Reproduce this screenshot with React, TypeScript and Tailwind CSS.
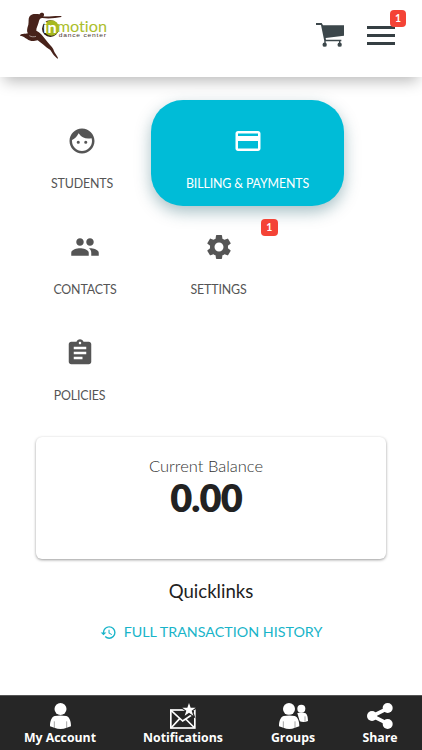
import React from "react";
import { MdFace, MdPayment, MdPeople, MdSettings, MdAssignment, MdHistory } from "react-icons/md";

function Logo() {
  return (
    <svg viewBox="54 33 272 146" className="block h-[48.7px] w-[90.7px] [font-variant-ligatures:none]" aria-label="inmotion dance center">
      <circle cx="151" cy="86" r="25" fill="#2e1c12" />
      <circle cx="154" cy="84" r="23" fill="#a6b820" />
      <path
        d="M119 43C120 37 130 37 132 42C133 46 131 49 128 49C146 51 163 47 184 48L184 51C166 54 148 57 127 54C120 54 117 60 116 67C114 77 108 84 109 92C120 97 128 107 136 118C144 130 156 139 160 148C163 160 175 171 174 176C166 173 157 160 151 150C135 140 125 129 113 121C106 122 101 124 94 123C82 120 72 108 60 107C62 100 73 103 84 100C79 94 82 83 85 74C87 65 84 55 89 49C95 40 108 42 119 43Z"
        fill="#47221a"
      />
      <path d="M88 107C94 111 102 111 108 109" stroke="#fff" strokeWidth="1.5" fill="none" />
      <text x="130" y="98" textLength="40" lengthAdjust="spacingAndGlyphs" fontFamily="Lato, sans-serif" fontWeight="700" fontSize="44" fill="#fff">in</text>
      <text x="170" y="97" textLength="151" lengthAdjust="spacingAndGlyphs" fontFamily="Lato, sans-serif" fontSize="45" fill="#abbe2b">motion</text>
      <text x="176" y="112" textLength="144" lengthAdjust="spacingAndGlyphs" letterSpacing="2" fontFamily="Liberation Sans, sans-serif" fontSize="17" fill="#493631">dance center</text>
    </svg>
  );
}

function CartIcon() {
  return (
    <svg viewBox="0 0 84 72" className="h-6 w-7" fill="#3c474b">
      <path d="M0 0H17L21 7H84V38L29 45L30 50H76V55H25L15 6H0Z" />
      <path d="M27 54v9M71 54v9" stroke="#3c474b" strokeWidth="4" />
      <circle cx="26" cy="65" r="6.5" />
      <circle cx="71" cy="65" r="6.5" />
    </svg>
  );
}

function Badge() {
  return (
    <span className="flex h-[16.500px] w-[16.500px] items-center justify-center rounded-[4px] bg-[#f44336] text-[10.5px] leading-none font-bold text-white">1</span>
  );
}

interface TileProps {
  icon: React.ReactNode;
  label: string;
  className: string;
}

function Tile({ icon, label, className }: TileProps) {
  return (
    <div className={`flex h-[106px] flex-col items-center pt-[26px] ${className}`}>
      <div className="h-[30px] text-[30px]">{icon}</div>
      <span className="mt-[20px] text-[12.4px] leading-4 tracking-[-0.14px] whitespace-nowrap">{label}</span>
    </div>
  );
}

function AccountIcon() {
  return (
    <svg viewBox="0 0 63 78" className="h-[26px] w-[21px]" fill="#fff">
      <circle cx="31.500" cy="18" r="18" />
      <path d="M14 39Q31 36 49 39C59 42 63 55 63 70L50 74Q32 82 13 74L0 70C0 55 4 42 14 39Z" />
      <path d="M13 55V75M50 55V75" stroke="#777" strokeWidth="2" />
    </svg>
  );
}

function MailIcon() {
  return (
    <svg viewBox="0 0 78 78" className="h-[26px] w-[26px]">
      <rect x="2.500" y="21" width="72" height="54" fill="none" stroke="#fff" strokeWidth="5" />
      <path d="M3 22L38 54L74 30M3 75L29 47M74 75L47 48" fill="none" stroke="#fff" strokeWidth="5" />
      <path d="M57 0L62 14H77L65 23L70 38L57 29L44 38L49 23L37 14H52Z" fill="#fff" stroke="#262626" strokeWidth="7" paintOrder="stroke" />
    </svg>
  );
}

function GroupIcon() {
  return (
    <svg viewBox="0 0 87 78" className="h-[26px] w-[29px]" fill="#fff">
      <circle cx="67" cy="17" r="12" />
      <path d="M55 30Q69 27 80 31Q87 38 87 54Q74 60 62 55Z" />
      <path d="M78 40V55" stroke="#777" strokeWidth="2" />
      <g stroke="#262626" strokeWidth="4" paintOrder="stroke">
        <circle cx="30" cy="18" r="18" />
        <path d="M14 39Q31 36 47 39C57 42 61 55 61 70L48 74Q31 82 13 74L0 70C0 55 4 42 14 39Z" />
      </g>
      <path d="M13 55V75M48 55V75" stroke="#777" strokeWidth="2" />
    </svg>
  );
}

function ShareIcon() {
  return (
    <svg viewBox="0 0 78 78" className="h-[26px] w-[26px]" fill="#fff">
      <path d="M62 16L16 39L62 62" fill="none" stroke="#fff" strokeWidth="11" />
      <circle cx="62" cy="15" r="15" />
      <circle cx="15" cy="39" r="15" />
      <circle cx="62" cy="63" r="15" />
    </svg>
  );
}

function NavItem({ icon, label, className }: TileProps) {
  return (
    <div className={`flex shrink-0 flex-col items-center ${className}`}>
      {icon}
      <span className="text-[12.3px] leading-[17px] font-bold whitespace-nowrap">{label}</span>
    </div>
  );
}

export default function App() {
  return (
    <div className="flex h-[750px] w-[422px] flex-col overflow-hidden bg-white font-['Lato',sans-serif] text-[#555]">
      <header className="relative flex h-[77px] shrink-0 items-start bg-white pl-[18px] shadow-[0_8px_14px_-4px_rgba(0,0,0,0.28)]">
        <div className="mt-[11px]"><Logo /></div>
        <div className="mt-[23px] ml-[207px]"><CartIcon /></div>
        <div className="relative mt-[26px] ml-[23px] flex w-7 flex-col gap-[5px]">
          <span className="h-[3px] bg-[#353f43]" />
          <span className="h-[3px] bg-[#353f43]" />
          <span className="h-[3px] bg-[#353f43]" />
          <div className="absolute -top-4 left-[23px]"><Badge /></div>
        </div>
      </header>

      <main className="flex-1">
        <div className="mt-[23px] flex pl-4">
          <Tile icon={<MdFace />} label="STUDENTS" className="w-[132px]" />
          <Tile
            icon={<MdPayment />}
            label="BILLING & PAYMENTS"
            className="ml-[3px] w-[193px] rounded-[32px] bg-[#00bcd7] text-white shadow-[0_6px_16px_rgba(0,75,90,0.35)]"
          />
        </div>
        <div className="flex pl-[18px]">
          <Tile icon={<MdPeople />} label="CONTACTS" className="w-[134px]" />
          <div className="relative ml-[3px]">
            <Tile icon={<MdSettings />} label="SETTINGS" className="w-[127px]" />
            <div className="absolute top-[13px] right-[4.500px]"><Badge /></div>
          </div>
        </div>
        <div className="flex pl-[18px]">
          <Tile icon={<MdAssignment />} label="POLICIES" className="w-[123px]" />
        </div>

        <section className="mt-[19px] ml-9 flex h-[122px] w-[350px] flex-col items-center rounded-[6px] bg-white pt-[18px] pr-[10px] shadow-[0_1px_3px_rgba(0,0,0,0.4)]">
          <span className="text-[16.500px] leading-[22px] font-light text-[#333]">Current Balance</span>
          <span className="text-[38px] leading-[40px] font-extrabold tracking-[-0.9px] text-[#222]">0.00</span>
        </section>

        <h2 className="mt-5 text-center text-[18.600px] leading-6 text-[#222]">Quicklinks</h2>
        <div className="mt-[20px] flex items-center justify-center gap-[7px] text-[#18b4c9]">
          <MdHistory className="text-[17px]" />
          <span className="text-[14.300px] leading-[18px]">FULL TRANSACTION HISTORY</span>
        </div>
      </main>

      <nav className="flex h-[55px] shrink-0 border-t border-[#555] bg-[#262626] pt-[7px] pl-6 font-['Open_Sans','Noto_Sans',sans-serif] text-white">
        <NavItem icon={<AccountIcon />} label="My Account" className="w-[72px]" />
        <NavItem icon={<MailIcon />} label="Notifications" className="ml-[47px] w-20" />
        <NavItem icon={<GroupIcon />} label="Groups" className="ml-12 w-[44px]" />
        <NavItem icon={<ShareIcon />} label="Share" className="ml-[47px] w-9" />
      </nav>
    </div>
  );
}
